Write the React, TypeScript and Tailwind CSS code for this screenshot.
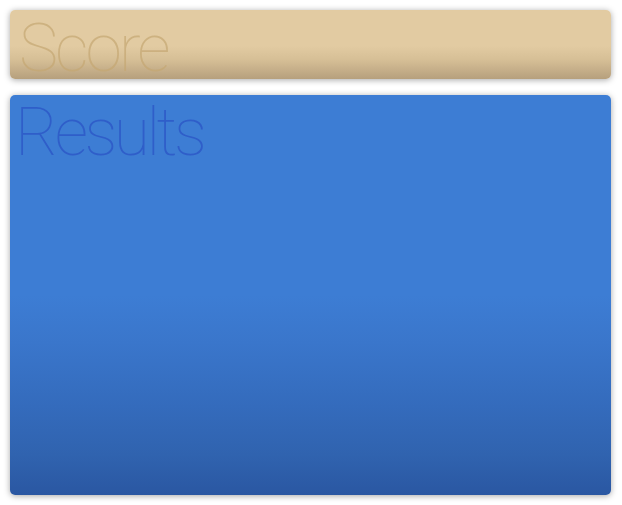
export default function App() {
  return (
    <div className="flex h-[505px] w-[622px] flex-col gap-4 bg-white p-[10px] pr-[11px] font-['Roboto',sans-serif]">
      <div className="h-[69px] rounded-[5px] bg-[linear-gradient(to_bottom,#e2cba2_0%,#e2cba2_52%,#d6bf96_72%,#c4ad88_88%,#b6a07d_100%)] shadow-[0_1px_6px_rgba(0,0,0,0.35)]">
        <h1 className="pl-[9px] pt-[11px] text-[66px] font-thin leading-[56px] tracking-[-3px] text-[#c4a672]/70">Score</h1>
      </div>
      <div className="flex-1 rounded-[5px] bg-[linear-gradient(to_bottom,#3d7dd4_0%,#3d7dd4_50%,#3a76cb_62%,#346bbc_78%,#3063af_90%,#2a57a2_100%)] shadow-[0_1px_6px_rgba(0,0,0,0.35)]">
        <h2 className="pl-[5px] pt-[5px] text-[66px] font-thin leading-none tracking-[-3.5px] text-[#2f5ec9]">Results</h2>
      </div>
    </div>
  )
}
